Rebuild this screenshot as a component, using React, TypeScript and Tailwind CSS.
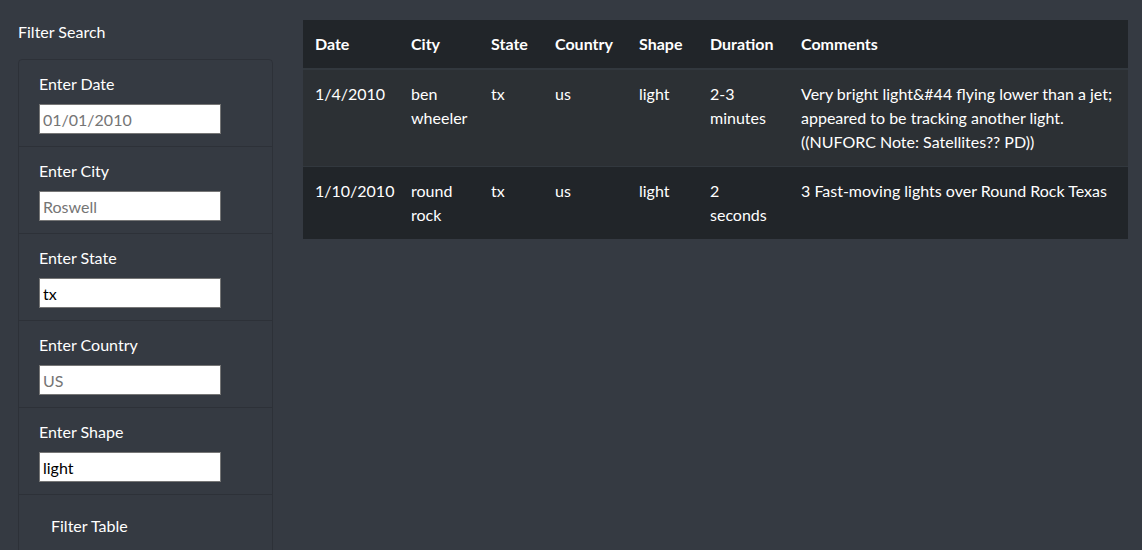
import React from "react";

const fields = [
  { label: "Enter Date", placeholder: "01/01/2010", value: "" },
  { label: "Enter City", placeholder: "Roswell", value: "" },
  { label: "Enter State", placeholder: "", value: "tx" },
  { label: "Enter Country", placeholder: "US", value: "" },
  { label: "Enter Shape", placeholder: "", value: "light" },
];

const rows = [
  {
    date: "1/4/2010",
    city: "ben wheeler",
    state: "tx",
    country: "us",
    shape: "light",
    duration: "2-3 minutes",
    comments:
      "Very bright light&#44 flying lower than a jet; appeared to be tracking another light. ((NUFORC Note: Satellites?? PD))",
  },
  {
    date: "1/10/2010",
    city: "round rock",
    state: "tx",
    country: "us",
    shape: "light",
    duration: "2 seconds",
    comments: "3 Fast-moving lights over Round Rock Texas",
  },
];

export default function App() {
  return (
    <div
      className="min-h-[550px] bg-[#353a42] text-white flex gap-[30px] pl-[18px] pr-[14px] pt-[20px]"
      style={{ fontFamily: '"Lato", "Liberation Sans", sans-serif' }}
    >
      {/* sidebar */}
      <aside className="w-[255px] shrink-0">
        <h4 className="text-base leading-6 mb-[15px]">Filter Search</h4>
        <ul className="border border-black/15 rounded-t">
          {fields.map((f) => (
            <li key={f.label} className="px-5 py-3 border-b border-black/15">
              <label className="block leading-6 mb-2">{f.label}</label>
              <input
                defaultValue={f.value}
                placeholder={f.placeholder}
                className="w-[182px] h-[30px] bg-white text-black px-[3px] border border-[#767676] placeholder:text-[#757575] outline-none"
              />
            </li>
          ))}
          <li className="px-5 py-3">
            <button className="px-3 py-[7px] leading-6 text-white">Filter Table</button>
          </li>
        </ul>
      </aside>

      {/* table */}
      <main className="flex-1">
        <table className="w-[825px] table-fixed border-collapse bg-[#212529] leading-6">
          <colgroup>
            <col className="w-[96px]" />
            <col className="w-[80px]" />
            <col className="w-[64px]" />
            <col className="w-[84px]" />
            <col className="w-[71px]" />
            <col className="w-[91px]" />
            <col />
          </colgroup>
          <thead>
            <tr className="border-b-2 border-[#32383e]">
              {["Date", "City", "State", "Country", "Shape", "Duration", "Comments"].map((h) => (
                <th key={h} className="p-3 text-left font-bold align-bottom">
                  {h}
                </th>
              ))}
            </tr>
          </thead>
          <tbody>
            {rows.map((r, i) => (
              <tr
                key={r.date}
                className={i % 2 === 0 ? "bg-[#2c3034] border-b border-[#32383e]" : ""}
              >
                <td className="p-3 align-top">{r.date}</td>
                <td className="p-3 align-top">{r.city}</td>
                <td className="p-3 align-top">{r.state}</td>
                <td className="p-3 align-top">{r.country}</td>
                <td className="p-3 align-top">{r.shape}</td>
                <td className="p-3 align-top">{r.duration}</td>
                <td className="p-3 align-top">{r.comments}</td>
              </tr>
            ))}
          </tbody>
        </table>
      </main>
    </div>
  );
}
